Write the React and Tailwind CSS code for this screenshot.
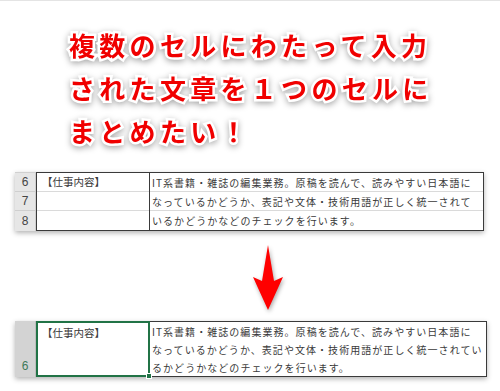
export default function App() {
  const jp = { fontFamily: '"Noto Sans CJK JP", "Noto Sans", sans-serif' };
  const title = "text-[26px] font-bold leading-[43px] tracking-[4.3px] text-[#f00000] [-webkit-text-stroke:5px_white] [paint-order:stroke_fill]";
  return (
    <div className="w-[500px] h-[391px] bg-white border-t border-[#e4e4e4] overflow-hidden" style={jp}>
      <div className="pl-[69px] pt-[22px] drop-shadow-[0_2px_3px_rgba(0,0,0,0.35)]">
        <div className={title}>複数のセルにわたって入力</div>
        <div className={title}>された文章を１つのセルに</div>
        <div className={title}>まとめたい！</div>
      </div>

      {/* table 1 */}
      <div className="ml-[15px] mt-[20px] w-[469px] flex bg-white shadow-[0_2px_5px_rgba(0,0,0,0.3)] text-[#3a3a3a]">
        <div className="w-[21px] bg-[#e6e6e6] flex flex-col border-t border-[#d0d0d0] text-[12px] text-[#444]" style={{ fontFamily: '"Liberation Sans", sans-serif' }}>
          <div className="h-[19px] border-b border-r border-[#cfcfcf] flex items-center justify-center">6</div>
          <div className="h-[19px] border-b border-r border-[#cfcfcf] flex items-center justify-center">7</div>
          <div className="h-[20px] border-r border-[#cfcfcf] flex items-center justify-center">8</div>
        </div>
        <div className="w-[114px] border border-[#3a3a3a] flex flex-col text-[10.5px]">
          <div className="h-[19px] border-b border-[#dadada] flex items-center pl-[5px]">【仕事内容】</div>
          <div className="h-[19px] border-b border-[#dadada]"></div>
          <div className="h-[18px]"></div>
        </div>
        <div className="flex-1 border border-l-0 border-[#3a3a3a] flex flex-col text-[10px] tracking-[1.05px] whitespace-nowrap overflow-hidden">
          <div className="h-[19px] border-b border-[#dadada] flex items-center pl-[2px]">IT系書籍・雑誌の編集業務。原稿を読んで、読みやすい日本語に</div>
          <div className="h-[19px] border-b border-[#dadada] flex items-center pl-[2px]">なっているかどうか、表記や文体・技術用語が正しく統一されて</div>
          <div className="h-[18px] flex items-center pl-[2px]">いるかどうかなどのチェックを行います。</div>
        </div>
      </div>

      {/* arrow */}
      <div className="ml-[252px] mt-[14px] w-[32px] h-[66px] drop-shadow-[1px_2px_2px_rgba(0,0,0,0.35)]">
        <svg width="32" height="66" viewBox="0 0 32 66">
          <polygon points="16,0 22,36 31,32 16,65 1,32 10,36" fill="#ff0000" />
        </svg>
      </div>

      {/* table 2 */}
      <div className="ml-[15px] mt-[10px] w-[472px] flex bg-white shadow-[0_2px_5px_rgba(0,0,0,0.3)] text-[#3a3a3a]">
        <div className="w-[21px] h-[56px] bg-[#d3d3d3] border-r border-[#bdbdbd] flex items-end justify-center pb-[2px] text-[12px] text-[#3f7a5a]" style={{ fontFamily: '"Liberation Sans", sans-serif' }}>6</div>
        <div className="relative w-[114px] h-[56px] border-2 border-[#217346] text-[10.5px] pl-[4px] pt-[1px] leading-[17px]">
          【仕事内容】
          <div className="absolute right-[-4px] bottom-[-4px] w-[6px] h-[6px] bg-[#217346] border border-white"></div>
        </div>
        <div className="flex-1 h-[56px] border border-l-0 border-[#3a3a3a] text-[10px] tracking-[1.05px] whitespace-nowrap overflow-hidden pl-[2px] pt-[1px] leading-[18px]">
          <div>IT系書籍・雑誌の編集業務。原稿を読んで、読みやすい日本語に</div>
          <div>なっているかどうか、表記や文体・技術用語が正しく統一されてい</div>
          <div>るかどうかなどのチェックを行います。</div>
        </div>
      </div>
    </div>
  );
}
